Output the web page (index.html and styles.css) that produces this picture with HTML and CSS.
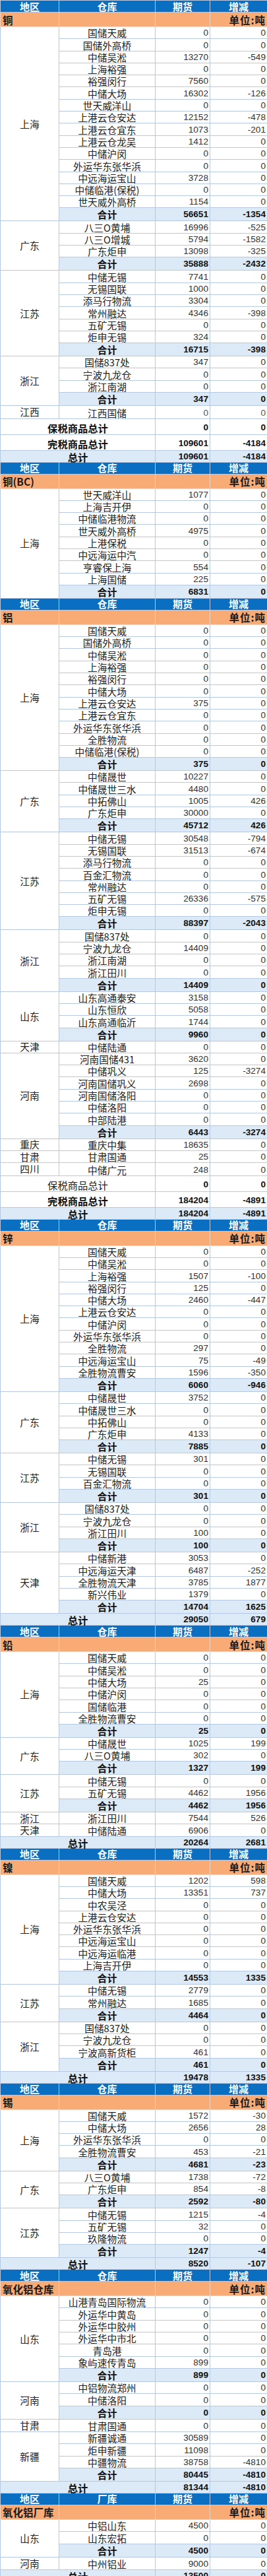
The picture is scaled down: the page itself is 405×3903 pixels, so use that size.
FILE: index.html
```html
<!DOCTYPE html>
<html lang="zh-CN">
<head>
<meta charset="utf-8">
<title>库存</title>
<link rel="stylesheet" href="styles.css">
</head>
<body>
<table class="inv">
<colgroup><col class="c1"><col class="c2"><col class="c3"><col class="c4"></colgroup>
<tbody>
<!-- 铜 -->
<tr class="hd"><td>地区</td><td>仓库</td><td>期货</td><td>增减</td></tr>
<tr class="un"><td class="nm">铜</td><td></td><td></td><td class="ut">单位:吨</td></tr>
<tr><td class="rg" rowspan="16">上海</td><td class="w">国储天威</td><td>0</td><td>0</td></tr>
<tr><td class="w">国储外高桥</td><td>0</td><td>0</td></tr>
<tr><td class="w">中储吴淞</td><td>13270</td><td>-549</td></tr>
<tr><td class="w">上海裕强</td><td>0</td><td>0</td></tr>
<tr><td class="w">裕强闵行</td><td>7560</td><td>0</td></tr>
<tr><td class="w">中储大场</td><td>16302</td><td>-126</td></tr>
<tr><td class="w">世天威洋山</td><td>0</td><td>0</td></tr>
<tr><td class="w">上港云仓安达</td><td>12152</td><td>-478</td></tr>
<tr><td class="w">上港云仓宜东</td><td>1073</td><td>-201</td></tr>
<tr><td class="w">上港云仓龙吴</td><td>1412</td><td>0</td></tr>
<tr><td class="w">中储沪闵</td><td>0</td><td>0</td></tr>
<tr><td class="w">外运华东张华浜</td><td>0</td><td>0</td></tr>
<tr><td class="w">中远海运宝山</td><td>3728</td><td>0</td></tr>
<tr><td class="w">中储临港(保税)</td><td>0</td><td>0</td></tr>
<tr><td class="w">世天威外高桥</td><td>1154</td><td>0</td></tr>
<tr class="st"><td class="w">合计</td><td>56651</td><td>-1354</td></tr>
<tr><td class="rg" rowspan="4">广东</td><td class="w">八三O黄埔</td><td>16996</td><td>-525</td></tr>
<tr><td class="w">八三O增城</td><td>5794</td><td>-1582</td></tr>
<tr><td class="w">广东炬申</td><td>13098</td><td>-325</td></tr>
<tr class="st"><td class="w">合计</td><td>35888</td><td>-2432</td></tr>
<tr><td class="rg" rowspan="7">江苏</td><td class="w">中储无锡</td><td>7741</td><td>0</td></tr>
<tr><td class="w">无锡国联</td><td>1000</td><td>0</td></tr>
<tr><td class="w">添马行物流</td><td>3304</td><td>0</td></tr>
<tr><td class="w">常州融达</td><td>4346</td><td>-398</td></tr>
<tr><td class="w">五矿无锡</td><td>0</td><td>0</td></tr>
<tr><td class="w">炬申无锡</td><td>324</td><td>0</td></tr>
<tr class="st"><td class="w">合计</td><td>16715</td><td>-398</td></tr>
<tr><td class="rg" rowspan="4">浙江</td><td class="w">国储837处</td><td>347</td><td>0</td></tr>
<tr><td class="w">宁波九龙仓</td><td>0</td><td>0</td></tr>
<tr><td class="w">浙江南湖</td><td>0</td><td>0</td></tr>
<tr class="st"><td class="w">合计</td><td>347</td><td>0</td></tr>
<tr class="one"><td class="rg">江西</td><td class="w">江西国储</td><td class="lt">0</td><td class="lt">0</td></tr>
<tr class="gt"><td class="lb" colspan="2">保税商品总计</td><td>0</td><td>0</td></tr>
<tr class="gt"><td class="lb" colspan="2">完税商品总计</td><td>109601</td><td>-4184</td></tr>
<tr class="tt"><td class="lb" colspan="2">总计</td><td>109601</td><td>-4184</td></tr>
<!-- 铜(BC) -->
<tr class="hd"><td>地区</td><td>仓库</td><td>期货</td><td>增减</td></tr>
<tr class="un"><td class="nm">铜(BC)</td><td></td><td></td><td class="ut">单位:吨</td></tr>
<tr><td class="rg" rowspan="9">上海</td><td class="w">世天威洋山</td><td>1077</td><td>0</td></tr>
<tr><td class="w">上海吉开伊</td><td>0</td><td>0</td></tr>
<tr><td class="w">中储临港物流</td><td>0</td><td>0</td></tr>
<tr><td class="w">世天威外高桥</td><td>4975</td><td>0</td></tr>
<tr><td class="w">上港保税</td><td>0</td><td>0</td></tr>
<tr><td class="w">中远海运中汽</td><td>0</td><td>0</td></tr>
<tr><td class="w">亨睿保上海</td><td>554</td><td>0</td></tr>
<tr><td class="w">上海国储</td><td>225</td><td>0</td></tr>
<tr class="st"><td class="w">合计</td><td>6831</td><td>0</td></tr>
<!-- 铝 -->
<tr class="hd"><td>地区</td><td>仓库</td><td>期货</td><td>增减</td></tr>
<tr class="un"><td class="nm">铝</td><td></td><td></td><td class="ut">单位:吨</td></tr>
<tr><td class="rg" rowspan="12">上海</td><td class="w">国储天威</td><td>0</td><td>0</td></tr>
<tr><td class="w">国储外高桥</td><td>0</td><td>0</td></tr>
<tr><td class="w">中储吴淞</td><td>0</td><td>0</td></tr>
<tr><td class="w">上海裕强</td><td>0</td><td>0</td></tr>
<tr><td class="w">裕强闵行</td><td>0</td><td>0</td></tr>
<tr><td class="w">中储大场</td><td>0</td><td>0</td></tr>
<tr><td class="w">上港云仓安达</td><td>375</td><td>0</td></tr>
<tr><td class="w">上港云仓宜东</td><td>0</td><td>0</td></tr>
<tr><td class="w">外运华东张华浜</td><td>0</td><td>0</td></tr>
<tr><td class="w">全胜物流</td><td>0</td><td>0</td></tr>
<tr><td class="w">中储临港(保税)</td><td>0</td><td>0</td></tr>
<tr class="st"><td class="w">合计</td><td>375</td><td>0</td></tr>
<tr><td class="rg" rowspan="5">广东</td><td class="w">中储晟世</td><td>10227</td><td>0</td></tr>
<tr><td class="w">中储晟世三水</td><td>4480</td><td>0</td></tr>
<tr><td class="w">中拓佛山</td><td>1005</td><td>426</td></tr>
<tr><td class="w">广东炬申</td><td>30000</td><td>0</td></tr>
<tr class="st"><td class="w">合计</td><td>45712</td><td>426</td></tr>
<tr><td class="rg" rowspan="8">江苏</td><td class="w">中储无锡</td><td>30548</td><td>-794</td></tr>
<tr><td class="w">无锡国联</td><td>31513</td><td>-674</td></tr>
<tr><td class="w">添马行物流</td><td>0</td><td>0</td></tr>
<tr><td class="w">百金汇物流</td><td>0</td><td>0</td></tr>
<tr><td class="w">常州融达</td><td>0</td><td>0</td></tr>
<tr><td class="w">五矿无锡</td><td>26336</td><td>-575</td></tr>
<tr><td class="w">炬申无锡</td><td>0</td><td>0</td></tr>
<tr class="st"><td class="w">合计</td><td>88397</td><td>-2043</td></tr>
<tr><td class="rg" rowspan="5">浙江</td><td class="w">国储837处</td><td>0</td><td>0</td></tr>
<tr><td class="w">宁波九龙仓</td><td>14409</td><td>0</td></tr>
<tr><td class="w">浙江南湖</td><td>0</td><td>0</td></tr>
<tr><td class="w">浙江田川</td><td>0</td><td>0</td></tr>
<tr class="st"><td class="w">合计</td><td>14409</td><td>0</td></tr>
<tr><td class="rg" rowspan="4">山东</td><td class="w">山东高通泰安</td><td>3158</td><td>0</td></tr>
<tr><td class="w">山东恒欣</td><td>5058</td><td>0</td></tr>
<tr><td class="w">山东高通临沂</td><td>1744</td><td>0</td></tr>
<tr class="st"><td class="w">合计</td><td>9960</td><td>0</td></tr>
<tr><td class="rg">天津</td><td class="w">中储陆通</td><td>0</td><td>0</td></tr>
<tr><td class="rg" rowspan="7">河南</td><td class="w">河南国储431</td><td>3620</td><td>0</td></tr>
<tr><td class="w">中储巩义</td><td>125</td><td>-3274</td></tr>
<tr><td class="w">河南国储巩义</td><td>2698</td><td>0</td></tr>
<tr><td class="w">河南国储洛阳</td><td>0</td><td>0</td></tr>
<tr><td class="w">中储洛阳</td><td>0</td><td>0</td></tr>
<tr><td class="w">中部陆港</td><td>0</td><td>0</td></tr>
<tr class="st"><td class="w">合计</td><td>6443</td><td>-3274</td></tr>
<tr><td class="rg">重庆</td><td class="w">重庆中集</td><td>18635</td><td>0</td></tr>
<tr><td class="rg">甘肃</td><td class="w">甘肃国通</td><td>25</td><td>0</td></tr>
<tr class="one"><td class="rg">四川</td><td class="w">中储广元</td><td>248</td><td>0</td></tr>
<tr class="gt"><td class="lb thin" colspan="2">保税商品总计</td><td>0</td><td>0</td></tr>
<tr class="gt"><td class="lb" colspan="2">完税商品总计</td><td>184204</td><td>-4891</td></tr>
<tr class="tt"><td class="lb" colspan="2">总计</td><td>184204</td><td>-4891</td></tr>
<!-- 锌 -->
<tr class="hd"><td>地区</td><td>仓库</td><td>期货</td><td>增减</td></tr>
<tr class="un"><td class="nm">锌</td><td></td><td></td><td class="ut">单位:吨</td></tr>
<tr><td class="rg" rowspan="12">上海</td><td class="w">国储天威</td><td>0</td><td>0</td></tr>
<tr><td class="w">中储吴淞</td><td>0</td><td>0</td></tr>
<tr><td class="w">上海裕强</td><td>1507</td><td>-100</td></tr>
<tr><td class="w">裕强闵行</td><td>125</td><td>0</td></tr>
<tr><td class="w">中储大场</td><td>2460</td><td>-447</td></tr>
<tr><td class="w">上港云仓安达</td><td>0</td><td>0</td></tr>
<tr><td class="w">中储沪闵</td><td>0</td><td>0</td></tr>
<tr><td class="w">外运华东张华浜</td><td>0</td><td>0</td></tr>
<tr><td class="w">全胜物流</td><td>297</td><td>0</td></tr>
<tr><td class="w">中远海运宝山</td><td>75</td><td>-49</td></tr>
<tr><td class="w">全胜物流曹安</td><td>1596</td><td>-350</td></tr>
<tr class="st"><td class="w">合计</td><td>6060</td><td>-946</td></tr>
<tr><td class="rg" rowspan="5">广东</td><td class="w">中储晟世</td><td>3752</td><td>0</td></tr>
<tr><td class="w">中储晟世三水</td><td>0</td><td>0</td></tr>
<tr><td class="w">中拓佛山</td><td>0</td><td>0</td></tr>
<tr><td class="w">广东炬申</td><td>4133</td><td>0</td></tr>
<tr class="st"><td class="w">合计</td><td>7885</td><td>0</td></tr>
<tr><td class="rg" rowspan="4">江苏</td><td class="w">中储无锡</td><td>301</td><td>0</td></tr>
<tr><td class="w">无锡国联</td><td>0</td><td>0</td></tr>
<tr><td class="w">百金汇物流</td><td>0</td><td>0</td></tr>
<tr class="st"><td class="w">合计</td><td>301</td><td>0</td></tr>
<tr><td class="rg" rowspan="4">浙江</td><td class="w">国储837处</td><td>0</td><td>0</td></tr>
<tr><td class="w">宁波九龙仓</td><td>0</td><td>0</td></tr>
<tr><td class="w">浙江田川</td><td>100</td><td>0</td></tr>
<tr class="st"><td class="w">合计</td><td>100</td><td>0</td></tr>
<tr><td class="rg" rowspan="5">天津</td><td class="w">中储新港</td><td>3053</td><td>0</td></tr>
<tr><td class="w">中远海运天津</td><td>6487</td><td>-252</td></tr>
<tr><td class="w">全胜物流天津</td><td>3785</td><td>1877</td></tr>
<tr><td class="w">新兴伟业</td><td>1379</td><td>0</td></tr>
<tr class="st"><td class="w">合计</td><td>14704</td><td>1625</td></tr>
<tr class="tt"><td class="lb" colspan="2">总计</td><td>29050</td><td>679</td></tr>
<!-- 铅 -->
<tr class="hd"><td>地区</td><td>仓库</td><td>期货</td><td>增减</td></tr>
<tr class="un"><td class="nm">铅</td><td></td><td></td><td class="ut">单位:吨</td></tr>
<tr><td class="rg" rowspan="7">上海</td><td class="w">国储天威</td><td>0</td><td>0</td></tr>
<tr><td class="w">中储吴淞</td><td>0</td><td>0</td></tr>
<tr><td class="w">中储大场</td><td>25</td><td>0</td></tr>
<tr><td class="w">中储沪闵</td><td>0</td><td>0</td></tr>
<tr><td class="w">国储临港</td><td>0</td><td>0</td></tr>
<tr><td class="w">全胜物流曹安</td><td>0</td><td>0</td></tr>
<tr class="st"><td class="w">合计</td><td>25</td><td>0</td></tr>
<tr><td class="rg" rowspan="3">广东</td><td class="w">中储晟世</td><td>1025</td><td>199</td></tr>
<tr><td class="w">八三O黄埔</td><td>302</td><td>0</td></tr>
<tr class="st"><td class="w">合计</td><td>1327</td><td>199</td></tr>
<tr><td class="rg" rowspan="3">江苏</td><td class="w">中储无锡</td><td>0</td><td>0</td></tr>
<tr><td class="w">五矿无锡</td><td>4462</td><td>1956</td></tr>
<tr class="st"><td class="w">合计</td><td>4462</td><td>1956</td></tr>
<tr><td class="rg">浙江</td><td class="w">浙江田川</td><td>7544</td><td>526</td></tr>
<tr><td class="rg">天津</td><td class="w">中储陆通</td><td>6906</td><td>0</td></tr>
<tr class="tt"><td class="lb" colspan="2">总计</td><td>20264</td><td>2681</td></tr>
<!-- 镍 -->
<tr class="hd"><td>地区</td><td>仓库</td><td>期货</td><td>增减</td></tr>
<tr class="un"><td class="nm">镍</td><td></td><td></td><td class="ut">单位:吨</td></tr>
<tr><td class="rg" rowspan="9">上海</td><td class="w">国储天威</td><td>1202</td><td>598</td></tr>
<tr><td class="w">中储大场</td><td>13351</td><td>737</td></tr>
<tr><td class="w">中农吴泾</td><td>0</td><td>0</td></tr>
<tr><td class="w">上港云仓安达</td><td>0</td><td>0</td></tr>
<tr><td class="w">外运华东张华浜</td><td>0</td><td>0</td></tr>
<tr><td class="w">中远海运宝山</td><td>0</td><td>0</td></tr>
<tr><td class="w">中远海运临港</td><td>0</td><td>0</td></tr>
<tr><td class="w">上海吉开伊</td><td>0</td><td>0</td></tr>
<tr class="st"><td class="w">合计</td><td>14553</td><td>1335</td></tr>
<tr><td class="rg" rowspan="3">江苏</td><td class="w">中储无锡</td><td>2779</td><td>0</td></tr>
<tr><td class="w">常州融达</td><td>1685</td><td>0</td></tr>
<tr class="st"><td class="w">合计</td><td>4464</td><td>0</td></tr>
<tr><td class="rg" rowspan="4">浙江</td><td class="w">国储837处</td><td>0</td><td>0</td></tr>
<tr><td class="w">宁波九龙仓</td><td>0</td><td>0</td></tr>
<tr><td class="w">宁波高新货柜</td><td>461</td><td>0</td></tr>
<tr class="st"><td class="w">合计</td><td>461</td><td>0</td></tr>
<tr class="tt"><td class="lb" colspan="2">总计</td><td>19478</td><td>1335</td></tr>
<!-- 锡 -->
<tr class="hd"><td>地区</td><td>仓库</td><td>期货</td><td>增减</td></tr>
<tr class="un"><td class="nm">锡</td><td></td><td></td><td class="ut">单位:吨</td></tr>
<tr><td class="rg" rowspan="5">上海</td><td class="w">国储天威</td><td>1572</td><td>-30</td></tr>
<tr><td class="w">中储大场</td><td>2656</td><td>28</td></tr>
<tr><td class="w">外运华东张华浜</td><td>0</td><td>0</td></tr>
<tr><td class="w">全胜物流曹安</td><td>453</td><td>-21</td></tr>
<tr class="st"><td class="w">合计</td><td>4681</td><td>-23</td></tr>
<tr><td class="rg" rowspan="3">广东</td><td class="w">八三O黄埔</td><td>1738</td><td>-72</td></tr>
<tr><td class="w">广东炬申</td><td>854</td><td>-8</td></tr>
<tr class="st"><td class="w">合计</td><td>2592</td><td>-80</td></tr>
<tr><td class="rg" rowspan="4">江苏</td><td class="w">中储无锡</td><td>1215</td><td>-4</td></tr>
<tr><td class="w">五矿无锡</td><td>32</td><td>0</td></tr>
<tr><td class="w">玖隆物流</td><td>0</td><td>0</td></tr>
<tr class="st"><td class="w">合计</td><td>1247</td><td>-4</td></tr>
<tr class="tt"><td class="lb" colspan="2">总计</td><td>8520</td><td>-107</td></tr>
<!-- 氧化铝仓库 -->
<tr class="hd"><td>地区</td><td>仓库</td><td>期货</td><td>增减</td></tr>
<tr class="un"><td class="nm">氧化铝仓库</td><td></td><td></td><td class="ut">单位:吨</td></tr>
<tr><td class="rg" rowspan="7">山东</td><td class="w">山港青岛国际物流</td><td>0</td><td>0</td></tr>
<tr><td class="w">外运华中黄岛</td><td>0</td><td>0</td></tr>
<tr><td class="w">外运华中胶州</td><td>0</td><td>0</td></tr>
<tr><td class="w">外运华中市北</td><td>0</td><td>0</td></tr>
<tr><td class="w">青岛港</td><td>0</td><td>0</td></tr>
<tr><td class="w">象屿速传青岛</td><td>899</td><td>0</td></tr>
<tr class="st"><td class="w">合计</td><td>899</td><td>0</td></tr>
<tr><td class="rg" rowspan="3">河南</td><td class="w">中铝物流郑州</td><td>0</td><td>0</td></tr>
<tr><td class="w">中储洛阳</td><td>0</td><td>0</td></tr>
<tr class="st"><td class="w">合计</td><td>0</td><td>0</td></tr>
<tr class="one"><td class="rg">甘肃</td><td class="w">甘肃国通</td><td>0</td><td>0</td></tr>
<tr><td class="rg" rowspan="4">新疆</td><td class="w">新疆诚通</td><td>30589</td><td>0</td></tr>
<tr><td class="w">炬申新疆</td><td>11098</td><td>0</td></tr>
<tr><td class="w">中疆物流</td><td>38758</td><td>-4810</td></tr>
<tr class="st"><td class="w">合计</td><td>80445</td><td>-4810</td></tr>
<tr class="tt"><td class="lb" colspan="2">总计</td><td>81344</td><td>-4810</td></tr>
<!-- 氧化铝厂库 -->
<tr class="hd"><td>地区</td><td>厂库</td><td>期货</td><td>增减</td></tr>
<tr class="un"><td class="nm">氧化铝厂库</td><td></td><td></td><td class="ut">单位:吨</td></tr>
<tr><td class="rg" rowspan="3">山东</td><td class="w">中铝山东</td><td>4500</td><td>0</td></tr>
<tr><td class="w">山东宏拓</td><td>0</td><td>0</td></tr>
<tr class="st"><td class="w">合计</td><td>4500</td><td>0</td></tr>
<tr class="one"><td class="rg">河南</td><td class="w">中州铝业</td><td>9000</td><td>0</td></tr>
<tr class="tt"><td class="lb" colspan="2">总计</td><td>13500</td><td>0</td></tr>
</tbody>
</table>
</body>
</html>
```

FILE: styles.css
```css
html, body {
  margin: 0;
  padding: 0;
  background: #ffffff;
}

.inv {
  border-collapse: collapse;
  table-layout: fixed;
  width: 405px;
  font-family: "Liberation Sans", "Noto Sans CJK SC", sans-serif;
  color: #333333;
}

.c1 { width: 89px; }
.c2 { width: 146px; }
.c3 { width: 83px; }
.c4 { width: 87px; }

.inv td {
  border: 1px solid #b7c8e2;
  padding: 0 2px 0 2px;
  height: 18.3px;
  box-sizing: border-box;
  font-size: 13.6px;
  line-height: 16px;
  text-align: right;
  vertical-align: bottom;
  white-space: nowrap;
}

.inv td.w {
  font-family: "Noto Sans CJK SC", sans-serif;
  font-size: 14.7px;
  color: #222222;
  text-align: center;
  padding: 0;
}

.inv td.rg {
  font-family: "Noto Sans CJK SC", sans-serif;
  font-size: 14.7px;
  color: #222222;
  text-align: center;
  vertical-align: middle;
  background: #ffffff;
  padding: 0;
}

.inv td.lt {
  color: #555555;
}

/* header row */
.hd td {
  background: #0a6fc0;
  color: #ffffff;
  border-color: #b7c8e2;
  font-family: "Noto Sans CJK SC", sans-serif;
  font-weight: 700;
  font-size: 15px;
  text-align: center;
  vertical-align: middle;
  height: 18px;
  line-height: 16px;
}

/* unit / metal name row */
.un td {
  background: #f9ab76;
  border-color: #f2d2bb;
  color: #1a1a1a;
  font-family: "Noto Sans CJK SC", sans-serif;
  font-weight: 700;
  font-size: 15.5px;
  height: 22px;
  line-height: 20px;
  vertical-align: middle;
}

.inv .un td.nm {
  text-align: left;
  padding-left: 3px;
}

.inv .un td.ut {
  text-align: right;
  padding-right: 2px;
  letter-spacing: 1px;
}

/* subtotal row */
.st td {
  background: #dce9f6;
  color: #111111;
  font-weight: 700;
  height: 20px;
  line-height: 18px;
}

.inv .st td.w {
  font-weight: 700;
  font-size: 15px;
  color: #111111;
}

/* grand-total rows for bonded / duty paid */
.gt td {
  background: #ffffff;
  color: #111111;
  font-weight: 700;
  height: 24px;
  line-height: 20px;
}

.inv td.lb {
  font-family: "Noto Sans CJK SC", sans-serif;
  font-size: 15.3px;
  text-align: center;
  padding: 0;
}

.inv td.lb.thin {
  font-weight: 400;
  color: #222222;
}

.one td {
  height: 19.5px;
}

/* total row */
.tt td {
  background: #dce9f6;
  color: #111111;
  font-weight: 700;
  height: 18px;
  line-height: 16px;
}
```
